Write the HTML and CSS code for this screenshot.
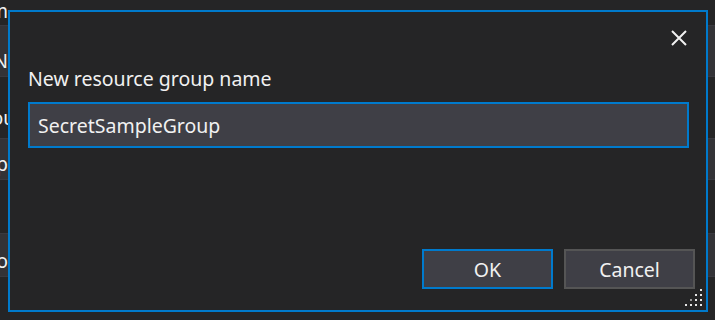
FILE: index.html
```html
<!DOCTYPE html>
<html lang="en">
<head>
  <meta charset="UTF-8" />
  <title>New resource group</title>
  <link rel="stylesheet" href="styles.css">
</head>
<body>

  <div class="backdrop">
    <div class="row top-row"><span class="row-text">Nam</span></div>
    <div class="row field field-name"><span class="row-text">N</span></div>
    <div class="row gap-row"><span class="row-text">Resou</span></div>
    <div class="row field field-group"><span class="row-text">Grp</span></div>
    <div class="row spacer"></div>
    <div class="row field field-loc"><span class="row-text">Loo</span></div>
  </div>

  <div class="dialog">
    <div class="dialog-head">
      <button class="close" title="Close">
        <svg width="16" height="16" viewBox="0 0 16 16">
          <path d="M1 1 L15 15 M15 1 L1 15" stroke="#f1f1f1" stroke-width="2" fill="none"/>
        </svg>
      </button>
    </div>

    <div class="dialog-body">
      <label for="group-name">New resource group name</label>
      <input type="text" id="group-name" value="SecretSampleGroup" />
    </div>

    <div class="dialog-foot">
      <button class="btn btn-default">OK</button>
      <button class="btn">Cancel</button>
    </div>

    <svg class="grip" width="18" height="18" viewBox="0 0 18 18">
      <rect x="15" y="0" width="2" height="2" fill="#e6e6e6"/>
      <rect x="10" y="5" width="2" height="2" fill="#e6e6e6"/>
      <rect x="15" y="5" width="2" height="2" fill="#e6e6e6"/>
      <rect x="5" y="10" width="2" height="2" fill="#9a9a9a"/>
      <rect x="10" y="10" width="2" height="2" fill="#e6e6e6"/>
      <rect x="15" y="10" width="2" height="2" fill="#e6e6e6"/>
      <rect x="0" y="15" width="2" height="2" fill="#e6e6e6"/>
      <rect x="5" y="15" width="2" height="2" fill="#e6e6e6"/>
      <rect x="10" y="15" width="2" height="2" fill="#e6e6e6"/>
      <rect x="15" y="15" width="2" height="2" fill="#e6e6e6"/>
    </svg>
  </div>

</body>
</html>
```

FILE: styles.css
```css
body {
  margin: 0;
  padding: 0;
  background: #252526;
  font-family: "Noto Sans", "Open Sans", sans-serif;
  color: #f1f1f1;
  width: 715px;
  height: 320px;
  overflow: hidden;
  position: relative;
}

.backdrop {
  display: flex;
  flex-direction: column;
}

.row {
  display: flex;
  align-items: center;
  overflow: hidden;
  font-size: 19px;
  box-sizing: border-box;
}

.row-text {
  margin-left: -40px;
  width: 48px;
  text-align: right;
  white-space: nowrap;
  color: #f1f1f1;
}

.top-row {
  height: 25px;
  align-items: flex-start;
  line-height: 22px;
}

.row.field {
  background: #333337;
  border-top: 1px solid #3a3a40;
  border-bottom: 1px solid #3a3a40;
}

.field-name {
  height: 52px;
  padding-top: 20px;
}

.row.gap-row {
  height: 61px;
  padding-top: 20px;
}

.field-group {
  height: 42px;
  padding-top: 10px;
}

.row.spacer {
  height: 53px;
}

.field-loc {
  height: 44px;
  padding-top: 12px;
}

.dialog {
  position: absolute;
  left: 8px;
  top: 10px;
  width: 700px;
  height: 302px;
  box-sizing: border-box;
  border: 2px solid #007acc;
  background: #252526;
  display: flex;
  flex-direction: column;
}

.dialog-head {
  height: 54px;
  display: flex;
  justify-content: flex-end;
  align-items: flex-start;
  padding: 18px 19px 0 0;
  box-sizing: border-box;
}

.close {
  background: none;
  border: none;
  padding: 0;
  width: 16px;
  height: 16px;
  cursor: pointer;
  display: block;
}

.close svg {
  display: block;
}

.dialog-body {
  padding: 0 17px 0 18px;
  display: flex;
  flex-direction: column;
}

.dialog-body label {
  font-size: 19.5px;
  line-height: 26px;
  margin-bottom: 10px;
}

.dialog-body input {
  height: 46px;
  box-sizing: border-box;
  border: 2px solid #007acc;
  background: #3f3f46;
  color: #f1f1f1;
  font-family: inherit;
  font-size: 19.5px;
  padding: 0 8px;
  outline: none;
}

.dialog-foot {
  margin-top: auto;
  display: flex;
  justify-content: flex-end;
  gap: 11px;
  padding: 0 11px 21px 0;
}

.btn {
  width: 131px;
  height: 40px;
  box-sizing: border-box;
  background: #3f3f46;
  border: 2px solid #555555;
  color: #f1f1f1;
  font-family: inherit;
  font-size: 19.5px;
  cursor: pointer;
}

.btn-default {
  border-color: #007acc;
}

.grip {
  position: absolute;
  right: 3px;
  bottom: 3px;
}
```
